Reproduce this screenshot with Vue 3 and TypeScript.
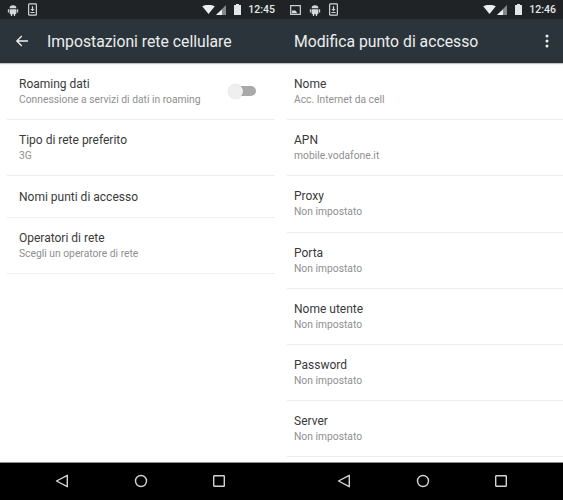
<script setup lang="ts">
interface Row { title: string; sub?: string; toggle?: boolean; h: number }
const leftRows: Row[] = [
  { title: 'Roaming dati', sub: 'Connessione a servizi di dati in roaming', toggle: true, h: 56 },
  { title: 'Tipo di rete preferito', sub: '3G', h: 56 },
  { title: 'Nomi punti di accesso', h: 42 },
  { title: 'Operatori di rete', sub: 'Scegli un operatore di rete', h: 56 },
]
const rightRows: Row[] = [
  { title: 'Nome', sub: 'Acc. Internet da cell', h: 56 },
  { title: 'APN', sub: 'mobile.vodafone.it', h: 56 },
  { title: 'Proxy', sub: 'Non impostato', h: 57 },
  { title: 'Porta', sub: 'Non impostato', h: 56 },
  { title: 'Nome utente', sub: 'Non impostato', h: 56 },
  { title: 'Password', sub: 'Non impostato', h: 56 },
  { title: 'Server', sub: 'Non impostato', h: 57 },
]
</script>

<template>
  <div class="page">
    <section class="pane left">
      <div class="status">
        <div class="status-icons">
          <svg class="ic" viewBox="0 0 14 14" width="12" height="12"><path d="M3 5a4 3.4 0 0 1 8 0zM3 6h8v4.5a1.5 1.5 0 0 1-1.5 1.5h-5A1.5 1.5 0 0 1 3 10.500zM1 6h1.300v4H1zM11.700 6H13v4h-1.300zM4.500 12h1.500v2H4.500zM8 12h1.500v2H8z" fill="#d5d7d8"/></svg>
          <svg class="ic" viewBox="0 0 10 14" width="9" height="13"><rect x="0.700" y="0.700" width="8.600" height="12.600" rx="0.800" fill="none" stroke="#d5d7d8" stroke-width="1.300"/><path d="M4.300 3.500h1.400v3H7.300L5 9 2.700 6.500h1.600zM2.700 9.800h4.600v1H2.700z" fill="#d5d7d8"/></svg>
        </div>
        <div class="status-right">
          <svg viewBox="0 0 14 10" width="13" height="9"><path d="M0 1.500Q7-2 14 1.500L7 10z" fill="#eceeee"/></svg>
          <svg class="signal" viewBox="0 0 10 10" width="10" height="10"><path d="M10 0v10H0z" fill="#83888b"/><path d="M6 4.500V10H0z" fill="#eceeee"/></svg>
          <svg class="battery" viewBox="0 0 7 11" width="7" height="11"><path d="M2 0h3v1h2v10H0V1h2z" fill="#e3e5e6"/></svg>
          <span class="clock">12:45</span>
        </div>
      </div>
      <header class="toolbar">
        <svg class="back" viewBox="0 0 14 14" width="14" height="14"><path d="M13 7H2.200M6.800 2 1.800 7l5 5" fill="none" stroke="#eef0f0" stroke-width="1.300"/></svg>
        <h1 class="heading heading-left">Impostazioni rete cellulare</h1>
      </header>
      <ul class="list list-left">
        <li v-for="r in leftRows" :key="r.title" class="row row-left" :class="`h${r.h}`">
          <div class="row-text">
            <div class="title">{{ r.title }}</div>
            <div v-if="r.sub" class="sub">{{ r.sub }}</div>
          </div>
          <div v-if="r.toggle" class="switch"><span class="track"></span><span class="thumb"></span></div>
        </li>
      </ul>
    </section>

    <section class="pane right">
      <div class="status">
        <div class="status-icons">
          <svg class="ic" viewBox="0 0 12 11" width="11" height="10"><rect x="0.700" y="0.700" width="10.600" height="9.600" fill="none" stroke="#d5d7d8" stroke-width="1.300"/><path d="M2 9V6h4l2 3z" fill="#d5d7d8"/></svg>
          <svg class="ic" viewBox="0 0 14 14" width="12" height="12"><path d="M3 5a4 3.4 0 0 1 8 0zM3 6h8v4.500a1.500 1.500 0 0 1-1.500 1.500h-5A1.500 1.500 0 0 1 3 10.500zM1 6h1.300v4H1zM11.700 6H13v4h-1.300zM4.500 12h1.500v2H4.500zM8 12h1.500v2H8z" fill="#d5d7d8"/></svg>
          <svg class="ic" viewBox="0 0 10 14" width="9" height="13"><rect x="0.700" y="0.700" width="8.600" height="12.600" rx="0.800" fill="none" stroke="#d5d7d8" stroke-width="1.300"/><path d="M4.300 3.500h1.400v3H7.300L5 9 2.700 6.500h1.600zM2.700 9.800h4.600v1H2.700z" fill="#d5d7d8"/></svg>
        </div>
        <div class="status-right">
          <svg viewBox="0 0 14 10" width="13" height="9"><path d="M0 1.500Q7-2 14 1.500L7 10z" fill="#eceeee"/></svg>
          <svg class="signal" viewBox="0 0 10 10" width="10" height="10"><path d="M10 0v10H0z" fill="#83888b"/><path d="M6 4.500V10H0z" fill="#eceeee"/></svg>
          <svg class="battery" viewBox="0 0 7 11" width="7" height="11"><path d="M2 0h3v1h2v10H0V1h2z" fill="#e3e5e6"/></svg>
          <span class="clock">12:46</span>
        </div>
      </div>
      <header class="toolbar toolbar-right">
        <h1 class="heading">Modifica punto di accesso</h1>
        <svg class="more" viewBox="0 0 4 14" width="4" height="14"><circle cx="2" cy="2" r="1.500" fill="#eef0f0"/><circle cx="2" cy="7" r="1.500" fill="#eef0f0"/><circle cx="2" cy="12" r="1.500" fill="#eef0f0"/></svg>
      </header>
      <ul class="list list-right">
        <li v-for="r in rightRows" :key="r.title" class="row row-right" :class="`h${r.h}`">
          <div class="row-text">
            <div class="title">{{ r.title }}</div>
            <div v-if="r.sub" class="sub">{{ r.sub }}</div>
          </div>
        </li>
      </ul>
    </section>

    <nav class="nav">
      <div class="nav-group">
        <svg viewBox="0 0 14 14" width="14" height="14"><path d="M12.300 1.300v11.400L1.500 7z" fill="none" stroke="#d4d4d4" stroke-width="1.400" stroke-linejoin="round"/></svg>
        <svg viewBox="0 0 14 14" width="14" height="14"><circle cx="7" cy="7" r="5.500" fill="none" stroke="#d4d4d4" stroke-width="1.400"/></svg>
        <svg viewBox="0 0 14 14" width="14" height="14"><rect x="1.700" y="1.700" width="10.600" height="10.600" rx="0.600" fill="none" stroke="#d4d4d4" stroke-width="1.400"/></svg>
      </div>
      <div class="nav-group">
        <svg viewBox="0 0 14 14" width="14" height="14"><path d="M12.300 1.300v11.400L1.500 7z" fill="none" stroke="#d4d4d4" stroke-width="1.400" stroke-linejoin="round"/></svg>
        <svg viewBox="0 0 14 14" width="14" height="14"><circle cx="7" cy="7" r="5.500" fill="none" stroke="#d4d4d4" stroke-width="1.400"/></svg>
        <svg viewBox="0 0 14 14" width="14" height="14"><rect x="1.700" y="1.700" width="10.600" height="10.600" rx="0.600" fill="none" stroke="#d4d4d4" stroke-width="1.400"/></svg>
      </div>
    </nav>
  </div>
</template>

<style>
html, body { margin: 0; background: #fff; }
</style>

<style scoped>
.page {
  width: 563px;
  height: 500px;
  position: relative;
  display: grid;
  grid-template-columns: 282px 281px;
  grid-template-rows: 462px 38px;
  overflow: hidden;
  font-family: Roboto, "Liberation Sans", sans-serif;
  background: #fff;
}
.pane { min-width: 0; overflow: hidden; display: flex; flex-direction: column; }
.status {
  height: 19px;
  flex: none;
  background: #1f2326;
  display: flex;
  align-items: center;
  justify-content: space-between;
  padding: 0 7px 0 7px;
}
.left .status { padding-left: 7px; }
.right .status { padding-left: 8px; }
.status-icons { display: flex; align-items: center; gap: 8px; }
.left .status-icons { gap: 9px; }
.status-right { display: flex; align-items: center; }
.signal { margin-left: 1px; }
.battery { margin-left: 8px; }
.clock { margin-left: 7px; font-size: 10.500px; font-weight: 500; color: #e8eaea; }
.toolbar {
  height: 44px;
  flex: none;
  display: flex;
  align-items: center;
  background: #2b343a;
  box-shadow: 0 1px 1px rgba(0, 0, 0, 0.25);
  position: relative;
  padding-left: 15px;
}
.toolbar-right { padding: 0 14px 0 12px; justify-content: space-between; }
.back { margin-right: 18px; }
.heading { margin: 0; font-size: 15.750px; font-weight: 400; color: #eceeee; white-space: nowrap; }
.list { list-style: none; margin: 0; padding: 0; }
.list-left { margin: 1px 7px 0; }
.list-right { margin: 1px 0 0 5px; }
.row {
  box-sizing: border-box;
  display: flex;
  align-items: center;
  padding-top: 1px;
  border-bottom: 1px solid #eeeeee;
}
.row-left { padding-left: 12px; position: relative; }
.row-right { padding-left: 7px; }
.h56 { height: 56px; }
.h57 { height: 56.500px; }
.h42 { height: 42px; }
.title { font-size: 12px; line-height: 15px; color: #3a3a3a; }
.sub { font-size: 10.300px; line-height: 14px; color: #8f8f8f; margin-top: 1px; }
.switch { position: absolute; right: 19px; top: 20px; width: 28px; height: 14px; }
.track { position: absolute; left: 2px; right: 0; top: 2px; height: 10px; border-radius: 5px; background: #a9a9a9; }
.thumb { position: absolute; left: 0; top: 0; width: 15px; height: 15px; border-radius: 50%; background: #efefef; box-shadow: 0 0 1px rgba(0,0,0,.2); }
.nav {
  grid-column: 1 / 3;
  background: #000;
  border-top: 1px solid #8d8d8d;
  box-sizing: border-box;
  display: grid;
  grid-template-columns: 282px 281px;
}
.nav-group {
  display: flex;
  align-items: center;
  gap: 64.500px;
  padding-left: 55px;
  padding-bottom: 1px;
}
</style>
